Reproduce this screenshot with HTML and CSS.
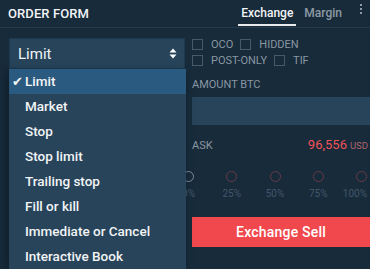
FILE: index.html
```html
<!DOCTYPE html>
<html>
<head>
  <meta charset="UTF-8">
  <title>Order Form</title>
  <link rel="stylesheet" href="styles.css">
</head>
<body>
  <div class="order-form">
    <div class="header">
      <h1 class="title">ORDER FORM</h1>
      <div class="tabs">
        <span class="tab active">Exchange</span>
        <span class="tab">Margin</span>
        <svg class="more" width="4" height="10" viewBox="0 0 4 10">
          <rect x="1" y="0" width="2" height="2" fill="#8e9aa5"/>
          <rect x="1" y="4" width="2" height="2" fill="#8e9aa5"/>
          <rect x="1" y="8" width="2" height="2" fill="#8e9aa5"/>
        </svg>
      </div>
    </div>

    <div class="content">
      <div class="left">
        <div class="select">
          <span>Limit</span>
          <svg class="select-arrows" width="8" height="11" viewBox="0 0 8 11">
            <path d="M0.5 4.5 L4 0.5 L7.5 4.5 Z" fill="#ffffff"/>
            <path d="M0.5 6.5 L4 10.5 L7.5 6.5 Z" fill="#ffffff"/>
          </svg>
        </div>
        <ul class="menu">
          <li class="menu-item selected"><span class="check">✔</span>Limit</li>
          <li class="menu-item">Market</li>
          <li class="menu-item">Stop</li>
          <li class="menu-item">Stop limit</li>
          <li class="menu-item">Trailing stop</li>
          <li class="menu-item">Fill or kill</li>
          <li class="menu-item">Immediate or Cancel</li>
          <li class="menu-item">Interactive Book</li>
        </ul>
      </div>

      <div class="right">
        <div class="options">
          <div class="option-row">
            <label class="option"><span class="box"></span>OCO</label>
            <label class="option"><span class="box"></span>HIDDEN</label>
          </div>
          <div class="option-row">
            <label class="option"><span class="box"></span>POST-ONLY</label>
            <label class="option"><span class="box"></span>TIF</label>
          </div>
        </div>

        <div class="field-label">AMOUNT BTC</div>
        <div class="amount-input"></div>

        <div class="ask-row">
          <span>ASK</span>
          <span class="price">96,556<small>USD</small></span>
        </div>

        <div class="slider">
          <div class="step first"><span class="dot"></span><span class="pct">0%</span></div>
          <div class="step"><span class="dot"></span><span class="pct">25%</span></div>
          <div class="step"><span class="dot"></span><span class="pct">50%</span></div>
          <div class="step"><span class="dot"></span><span class="pct">75%</span></div>
          <div class="step last"><span class="dot"></span><span class="pct">100%</span></div>
        </div>

        <button class="sell-button">Exchange Sell</button>
      </div>
    </div>
  </div>
</body>
</html>
```

FILE: styles.css
```css
:root {
  --bg: #172b3b;
  --line: #243b4c;
  --field: #27445a;
  --menu: #27445a;
  --menu-active: #2a5a7f;
  --muted: #8a96a1;
  --dim: #43566a;
  --red: #f05359;
  --sell: #f0484d;
}

html, body {
  margin: 0;
  height: 100%;
  background: var(--bg);
  font-family: Roboto, 'Liberation Sans', sans-serif;
  color: #f2f4f6;
  overflow: hidden;
}

.header {
  display: flex;
  align-items: center;
  justify-content: space-between;
  height: 27px;
  padding-left: 8px;
  border-bottom: 1px solid var(--line);
}

.title {
  margin: 0;
  font-size: 13px;
  font-weight: 500;
  letter-spacing: 0.1px;
}

.tabs {
  display: flex;
  align-items: flex-start;
  height: 27px;
}

.tab {
  box-sizing: border-box;
  height: 26px;
  padding: 6px 3px 0;
  margin-right: 5px;
  font-size: 12px;
  font-weight: 500;
  color: #8e9aa5;
  border-bottom: 2px solid transparent;
}

.tab.active {
  color: #f2f4f6;
  border-bottom-color: #e8ecef;
}

.more {
  margin: 4px 7px 0 9px;
}

.content {
  display: flex;
  gap: 7px;
  padding: 10px 0 0 9px;
}

.left {
  position: relative;
  width: 176px;
  flex-shrink: 0;
}

.select {
  box-sizing: border-box;
  display: flex;
  align-items: center;
  justify-content: space-between;
  height: 31px;
  padding: 0 7px 0 8px;
  background: var(--field);
  border: 1px solid #1c3950;
  font-size: 15px;
}

.menu {
  position: absolute;
  top: 31px;
  left: 0;
  right: -1px;
  margin: 0;
  padding: 0;
  list-style: none;
  background: var(--menu);
  box-shadow: -2px 2px 8px rgba(0, 0, 0, 0.35);
  z-index: 2;
}

.menu-item {
  position: relative;
  height: 25px;
  line-height: 25px;
  padding-left: 16px;
  font-size: 13.5px;
  font-weight: 500;
}

.menu-item.selected {
  background: var(--menu-active);
}

.check {
  position: absolute;
  left: 3px;
  font-size: 13px;
}

.right {
  flex: 1;
  min-width: 0;
}

.options {
  display: flex;
  flex-direction: column;
  gap: 4px;
}

.option-row {
  display: flex;
  gap: 7px;
}

.option {
  display: flex;
  align-items: center;
  gap: 8px;
  height: 12px;
  font-size: 11px;
  color: var(--muted);
}

.box {
  box-sizing: border-box;
  width: 11px;
  height: 11px;
  border: 1px solid #455a6d;
}

.field-label {
  margin-top: 12px;
  line-height: 13px;
  font-size: 11px;
  color: var(--muted);
}

.amount-input {
  height: 28px;
  margin-top: 6px;
  background: var(--field);
}

.ask-row {
  display: flex;
  align-items: center;
  justify-content: space-between;
  margin-top: 12px;
  line-height: 16px;
  font-size: 11px;
  color: var(--muted);
}

.price {
  color: var(--red);
  font-size: 13px;
  margin-right: 2px;
}

.price small {
  margin-left: 3px;
  font-size: 9.5px;
  color: #b0626a;
}

.slider {
  display: flex;
  justify-content: space-between;
  margin: 17px 3px 0 -9px;
}

.step {
  display: flex;
  flex-direction: column;
  align-items: center;
  width: 11px;
}

.dot {
  box-sizing: border-box;
  width: 11px;
  height: 11px;
  border-radius: 50%;
  border: 1px solid #6a3a47;
}

.step.first .dot {
  border-color: #7d8b97;
}

.pct {
  margin-top: 6px;
  line-height: 12px;
  font-size: 10px;
  color: var(--dim);
  white-space: nowrap;
}

.step.last .pct {
  align-self: flex-end;
}

.sell-button {
  display: block;
  width: 100%;
  height: 30px;
  margin-top: 17px;
  border: none;
  background: var(--sell);
  color: #ffffff;
  font-family: inherit;
  font-size: 14px;
  font-weight: 500;
  letter-spacing: 0.2px;
}
```
